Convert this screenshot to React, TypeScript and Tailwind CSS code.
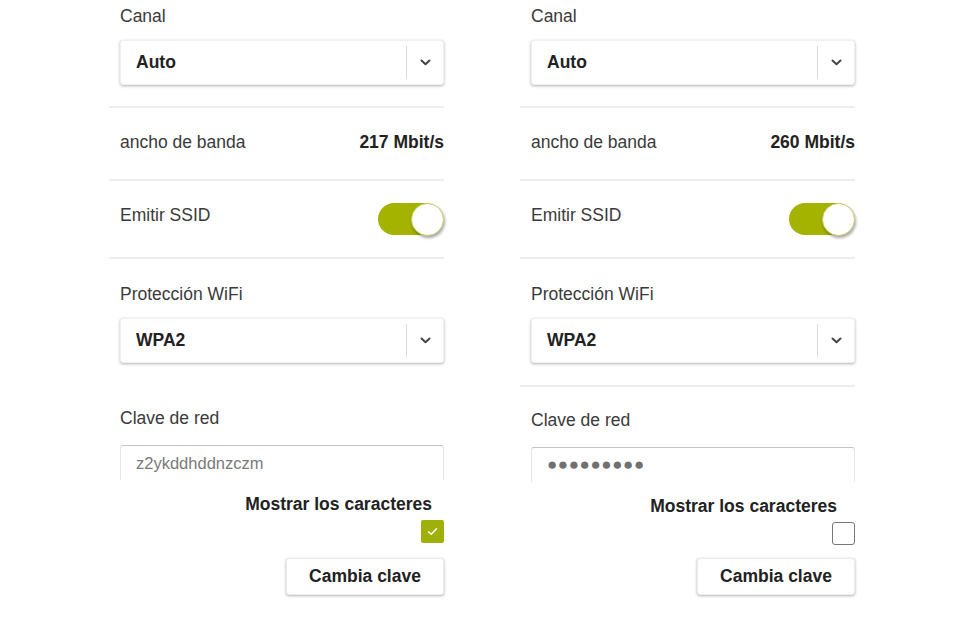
// WiFi settings: two side-by-side band panels (2.4 GHz / 5 GHz) with
// channel, bandwidth, SSID broadcast, protection and key fields.

type Band = {
  channel: string;
  rate: string;
  protection: string;
  key: string;
  showKey: boolean;
  lastDivider: boolean;
  labelMr: string;
};

const BANDS: Band[] = [
  {
    channel: "Auto",
    rate: "217 Mbit/s",
    protection: "WPA2",
    key: "z2ykddhddnzczm",
    showKey: true,
    lastDivider: false,
    labelMr: "mr-[12px]",
  },
  {
    channel: "Auto",
    rate: "260 Mbit/s",
    protection: "WPA2",
    key: "●●●●●●●●●",
    showKey: false,
    lastDivider: true,
    labelMr: "mr-[18px]",
  },
];

const FONT = { fontFamily: '"Liberation Sans", Arial, sans-serif' };

export default function App() {
  return (
    <div className="w-[971px] h-[636px] bg-white overflow-hidden" style={FONT}>
      <div className="flex gap-[76px] pl-[109px]">
        {BANDS.map((b, i) => (
          <Panel key={i} band={b} />
        ))}
      </div>
    </div>
  );
}

function Panel({ band }: { band: Band }) {
  return (
    <div className="w-[335px] flex flex-col text-[17.5px] text-[#3a3a3a]">
      <div className="pl-[11px] pt-[5px]">
        <div className="leading-[22px]">Canal</div>
        <Select value={band.channel} />
      </div>
      <Divider className="mt-[21px]" />

      <div className="h-[71px] pl-[11px] flex items-center justify-between">
        <span className="mb-[3px]">ancho de banda</span>
        <span className="mb-[3px] font-bold text-[#222]">{band.rate}</span>
      </div>
      <Divider />

      <div className="h-[76px] pl-[11px] flex items-center justify-between">
        <span className="mb-[8px]">Emitir SSID</span>
        <Toggle />
      </div>
      <Divider />

      <div className="pl-[11px] pt-[24px]">
        <div className="leading-[22px]">Protección WiFi</div>
        <Select value={band.protection} />
      </div>
      {band.lastDivider ? (
        <Divider className="mt-[22px]" />
      ) : (
        <div className="mt-[22px]" />
      )}

      <div className="pl-[11px] pt-[22px] flex flex-col">
        <div className="leading-[22px]">Clave de red</div>
        <div className="mt-[16px] h-[35px] rounded-t-[3px] border-t border-x border-t-[#c4c4c4] border-x-[#e6e6e6] flex items-center pl-[15px] pr-2">
          <span
            className={
              band.showKey
                ? "text-[16.5px] text-[#7a7a7a]"
                : "text-[17px] leading-[20px] tracking-[0.6px] text-[#707070]"
            }
          >
            {band.key}
          </span>
        </div>
        <div
          className={`mt-[13px] self-end leading-[22px] font-bold text-[#222] ${band.labelMr}`}
        >
          Mostrar los caracteres
        </div>
        <div className="mt-[5px] self-end">
          <Checkbox checked={band.showKey} />
        </div>
        <button
          type="button"
          className={`self-end w-[158px] h-[37px] bg-white rounded-[3px] border border-[#ececec] shadow-[0_1px_3px_rgba(0,0,0,0.3)] font-bold text-[#222] text-[17.5px] ${
            band.showKey ? "mt-[15px]" : "mt-[13px]"
          }`}
        >
          Cambia clave
        </button>
      </div>
    </div>
  );
}

function Divider({ className = "" }: { className?: string }) {
  return <div className={`h-[2px] bg-[#eeeeee] ${className}`} />;
}

function Select({ value }: { value: string }) {
  return (
    <div className="mt-[13px] h-[45px] bg-white rounded-[3px] border border-[#f0f0f0] shadow-[0_1px_3px_rgba(0,0,0,0.3)] flex items-stretch">
      <div className="flex-1 flex items-center pl-[15px] font-bold text-[#222]">
        {value}
      </div>
      <div className="my-[5px] w-px bg-[#dcdcdc]" />
      <div className="w-[36px] flex items-center justify-center">
        <svg width="11" height="7" viewBox="0 0 11 7" fill="none">
          <path
            d="M1.5 1.5 L5.5 5.2 L9.5 1.5"
            stroke="#444"
            strokeWidth="2"
            strokeLinecap="round"
            strokeLinejoin="round"
          />
        </svg>
      </div>
    </div>
  );
}

function Toggle() {
  return (
    <div className="relative w-[66px] h-[34px]">
      <div className="absolute left-0 top-[1px] w-[64px] h-[32px] rounded-full bg-[#a3b300]" />
      <div className="absolute right-0 top-[1px] w-[33px] h-[33px] rounded-full bg-white border border-[#c8d060] shadow-[1px_2px_3px_rgba(0,0,0,0.35)]" />
    </div>
  );
}

function Checkbox({ checked }: { checked: boolean }) {
  if (checked) {
    return (
      <div className="w-[23px] h-[23px] rounded-[2px] bg-[#9fb00a] flex items-center justify-center">
        <svg width="11" height="9" viewBox="0 0 11 9" fill="none">
          <path
            d="M1.5 4.8 L4.2 7.2 L9.5 1.8"
            stroke="white"
            strokeWidth="1.4"
            strokeLinecap="round"
            strokeLinejoin="round"
          />
        </svg>
      </div>
    );
  }
  return (
    <div className="w-[23px] h-[23px] rounded-[3px] bg-white border-[1.5px] border-[#777]" />
  );
}
